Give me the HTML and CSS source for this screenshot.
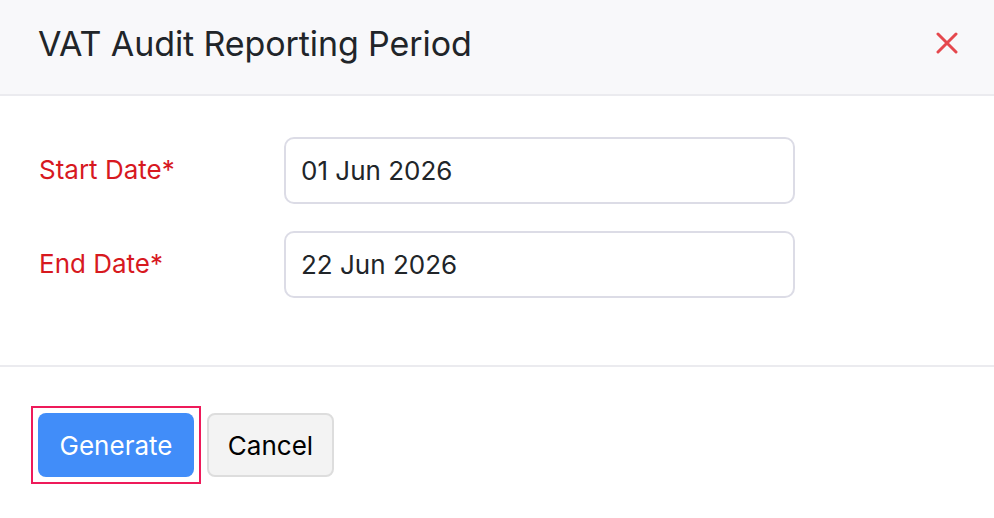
FILE: index.html
```html
<!DOCTYPE html>
<html>
<head>
<meta charset="utf-8">
<link rel="stylesheet" href="styles.css">
</head>
<body>
<div class="dialog">
  <div class="header">
    <h1 class="title">VAT Audit Reporting Period</h1>
    <button class="close" aria-label="Close">
      <svg width="22" height="22" viewBox="0 0 22 22"><path d="M2 2 L20 20 M20 2 L2 20" stroke="#e5484d" stroke-width="3" stroke-linecap="round"/></svg>
    </button>
  </div>
  <div class="body">
    <div class="row">
      <label class="label">Start Date*</label>
      <div class="input">01 Jun 2026</div>
    </div>
    <div class="row">
      <label class="label">End Date*</label>
      <div class="input">22 Jun 2026</div>
    </div>
  </div>
  <div class="footer">
    <span class="focus-ring"><button class="btn primary">Generate</button></span>
    <button class="btn secondary">Cancel</button>
  </div>
</div>
</body>
</html>
```
FILE: styles.css
```css
html, body {
  margin: 0;
  padding: 0;
  background: #ffffff;
  font-family: Inter, "Noto Sans", sans-serif;
  color: #212529;
}
.dialog {
  width: 994px;
}
.header {
  height: 94px;
  box-sizing: content-box;
  background: #f8f8fa;
  border-bottom: 2px solid #ebebef;
  display: flex;
  align-items: center;
  justify-content: space-between;
  padding: 0 36px 0 38px;
}
.title {
  margin: 0 0 8px 0;
  font-size: 34px;
  font-weight: 400;
  letter-spacing: -0.1px;
  color: #212529;
}
.close {
  background: none;
  border: none;
  padding: 0;
  margin-bottom: 8px;
  display: flex;
}
.body {
  padding: 41px 0 67px 39px;
  display: flex;
  flex-direction: column;
  gap: 27px;
  border-bottom: 2px solid #ebebef;
}
.row {
  display: flex;
  align-items: center;
}
.label {
  width: 245px;
  font-size: 26px;
  color: #d7191f;
  margin-bottom: 2px;
}
.input {
  width: 511px;
  height: 67px;
  box-sizing: border-box;
  border: 2px solid #dcdce6;
  border-radius: 10px;
  padding: 0 15px;
  display: flex;
  align-items: center;
  font-size: 26px;
  color: #212529;
}
.footer {
  padding: 39px 0 0 31px;
  display: flex;
  align-items: center;
  gap: 6px;
}
.focus-ring {
  display: flex;
  border: 2px solid #ee1a5a;
  padding: 5px;
}
.btn {
  height: 64px;
  box-sizing: border-box;
  border-radius: 8px;
  font-family: Inter, "Noto Sans", sans-serif;
  font-size: 26px;
  padding: 0;
}
.primary {
  width: 156px;
  background: #418df9;
  color: #ffffff;
  border: none;
}
.secondary {
  width: 127px;
  background: #f3f3f3;
  border: 2px solid #dddddd;
  color: #000000;
}
```
